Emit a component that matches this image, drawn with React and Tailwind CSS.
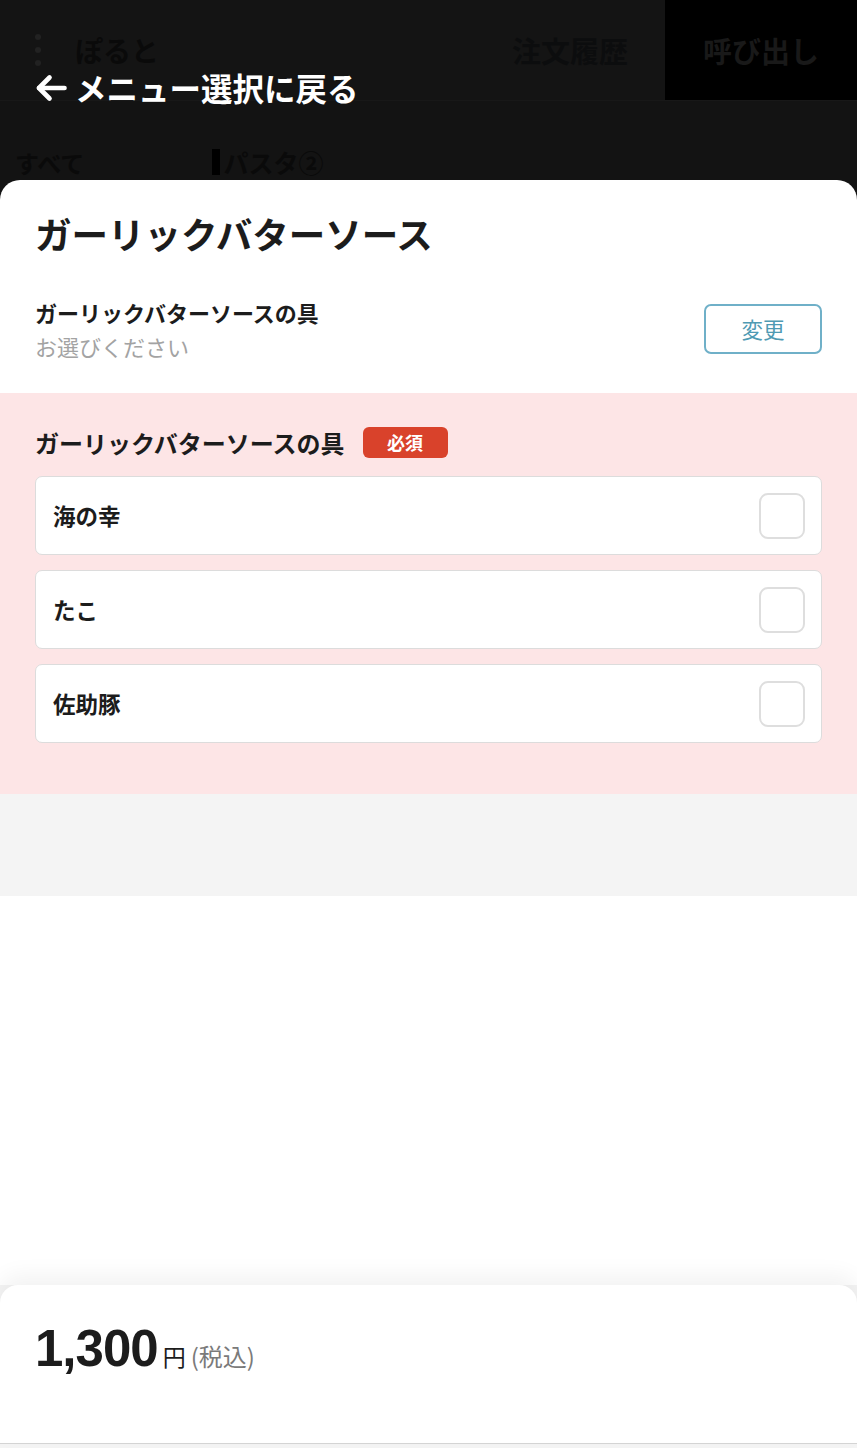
import React from "react";

const jp = { fontFamily: '"Noto Sans CJK JP", "Noto Sans", sans-serif' };

function OptionRow({ label }) {
  return (
    <div className="flex h-[79px] items-center justify-between rounded-[7px] border-[1.5px] border-[#dcdcdc] bg-white pl-[17px] pr-[16px]">
      <span className="text-[22.5px] font-bold leading-none text-[#1c1c1c]">{label}</span>
      <span className="block h-[46px] w-[46px] rounded-[9px] border-2 border-[#dedede] bg-white" />
    </div>
  );
}

export default function App() {
  return (
    <div className="relative h-[1448px] w-full overflow-hidden bg-[#131313]" style={jp}>
      {/* dimmed page behind */}
      <div className="flex h-[101px] items-stretch border-b border-[#181818] bg-[#141414]">
        <div className="flex items-center pl-[35px]">
          <div className="flex flex-col gap-[7px]">
            <span className="block h-[6px] w-[6px] rounded-full bg-[#222]" />
            <span className="block h-[6px] w-[6px] rounded-full bg-[#222]" />
            <span className="block h-[6px] w-[6px] rounded-full bg-[#222]" />
          </div>
          <span className="ml-[34px] text-[28px] font-bold leading-none text-[#0a0a0a]">ぽると</span>
        </div>
        <div className="flex flex-1 items-center justify-end pr-[37px]">
          <span className="text-[29px] font-bold leading-none text-[#0c0d0e]">注文履歴</span>
        </div>
        <div className="flex w-[192px] items-center justify-center bg-black">
          <span className="text-[29px] font-bold leading-none text-[#191919]">呼び出し</span>
        </div>
      </div>
      <div className="flex items-end pt-[48px]">
        <span className="ml-[15px] text-[24px] font-bold leading-none text-[#0a0a0a]">すべて</span>
        <span className="ml-[128px] flex items-center text-[25px] font-bold leading-none text-[#0a0a0a]">
          <span className="mr-[3px] inline-block h-[26px] w-[8px] bg-black" />
          パスタ②
        </span>
      </div>

      {/* overlay */}
      <div className="absolute inset-0 flex flex-col">
        <div className="flex h-[180px] items-start pl-[33px] pt-[70px]">
          <div className="flex items-center gap-[6px] text-white">
            <svg width="36" height="36" viewBox="0 0 24 24" fill="none" stroke="white" strokeWidth="3.1" strokeLinecap="round" strokeLinejoin="round">
              <path d="M21 12H4" />
              <path d="M11 5l-7 7 7 7" />
            </svg>
            <span className="text-[31.5px] font-bold leading-none">メニュー選択に戻る</span>
          </div>
        </div>

        <div className="flex flex-1 flex-col rounded-t-[20px] bg-white">
          <div className="px-[35px] pb-[32px] pt-[32px]">
            <h1 className="text-[36.5px] font-bold leading-[44px] text-[#1c1c1c]">ガーリックバターソース</h1>
            <div className="mt-[41px] flex items-center justify-between">
              <div className="flex flex-col">
                <span className="text-[22px] font-bold leading-[30px] text-[#1c1c1c]">ガーリックバターソースの具</span>
                <span className="mt-[4px] text-[22px] leading-[30px] text-[#a3a3a3]">お選びください</span>
              </div>
              <button className="flex h-[50px] w-[118px] items-center justify-center rounded-[7px] border-2 border-[#6fb0c8] bg-white text-[21.5px] text-[#4f9ab3]">
                変更
              </button>
            </div>
          </div>

          <div className="bg-[#fde5e6] px-[35px] pb-[51px] pt-[34px]">
            <div className="flex items-center gap-[18px]">
              <span className="text-[24px] font-bold leading-none text-[#1c1c1c]">ガーリックバターソースの具</span>
              <span className="flex h-[31px] w-[85px] items-center justify-center rounded-[6px] bg-[#d9422b] text-[18px] font-bold text-white">
                必須
              </span>
            </div>
            <div className="mt-[18px] flex flex-col gap-[15px]">
              <OptionRow label="海の幸" />
              <OptionRow label="たこ" />
              <OptionRow label="佐助豚" />
            </div>
          </div>

          <div className="h-[102px] bg-[#f4f4f4]" />

          <div className="flex-1 bg-white" />

          <div className="relative bg-[#f4f4f4] pb-[4px]">
            <div className="h-[159px] rounded-t-[18px] border-b border-[#d4d4d4] bg-white px-[35px] pt-[38px] shadow-[0_-10px_22px_rgba(0,0,0,0.05)]">
              <div className="flex items-baseline">
                <span className="text-[51px] font-bold leading-none tracking-[-1px] text-[#1c1c1c]" style={{ fontFamily: '"Liberation Sans", Arial, sans-serif' }}>
                  1,300
                </span>
                <span className="ml-[5px] text-[23px] leading-none text-[#1c1c1c]">円</span>
                <span className="ml-[5px] text-[24px] leading-none text-[#7a7a7a]">(税込)</span>
              </div>
            </div>
          </div>
        </div>
      </div>
    </div>
  );
}
